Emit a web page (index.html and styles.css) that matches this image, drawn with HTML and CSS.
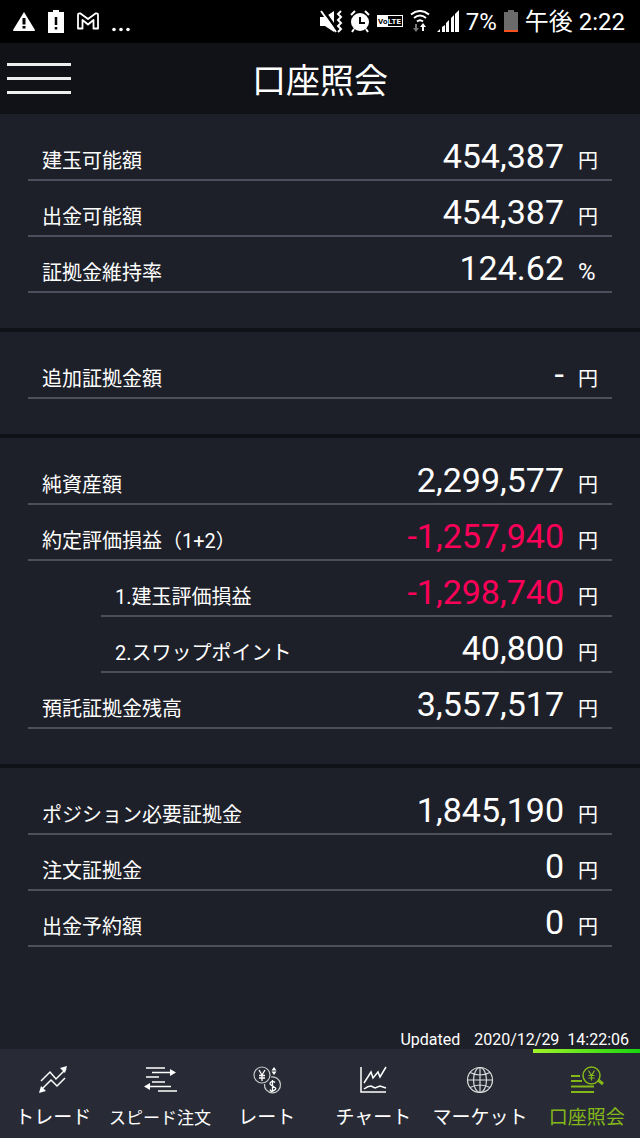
FILE: index.html
```html
<!DOCTYPE html>
<html lang="ja">
<head>
    <meta charset="UTF-8">
    <meta name="viewport" content="width=device-width, initial-scale=1.0">
    <title>口座照会</title>
    <link rel="stylesheet" href="styles.css">
</head>
<body>
    <div class="status-bar">
        <div class="status-left">
            <svg width="22" height="24" viewBox="0 0 22 24">
                <path d="M11 2 L22 20 Q22 21 21 21 H1 Q0 21 0 20 Z" fill="#fff"/>
                <path d="M11 8v6.500M11 16v2.500" stroke="#000" stroke-width="3"/>
            </svg>
            <svg width="16" height="24" viewBox="0 0 16 24">
                <path d="M5 0h6v2h5v21H0V2h5z" fill="#fff"/>
                <path d="M8 7v8M8 17v2.500" stroke="#000" stroke-width="2.500"/>
            </svg>
            <svg width="22" height="24" viewBox="0 0 22 24">
                <path d="M1 18.500V5q0-2 2.500-1.500L11 9l7.500-5.500Q21 3 21 5v13.500h-4.500V10L11 14.500 5.500 10v8.500z" fill="none" stroke="#fff" stroke-width="1.800" stroke-linejoin="round"/>
            </svg>
            <svg width="20" height="24" viewBox="0 0 20 24" fill="#fff">
                <circle cx="2" cy="19.500" r="1.800"/><circle cx="9" cy="19.500" r="1.800"/><circle cx="16" cy="19.500" r="1.800"/>
            </svg>
        </div>
        <div class="status-right">
            <svg width="23" height="24" viewBox="0 0 23 24">
                <path d="M0 7h5l9-6v21l-9-6H0z" fill="#fff"/>
                <path d="M3 0l15 21" stroke="#000" stroke-width="3"/>
                <path d="M1 1l15 21" stroke="#fff" stroke-width="2"/>
                <path d="M21 1l-3 3 3 3-3 3 3 3-3 3 3 3-3 3" fill="none" stroke="#fff" stroke-width="2"/>
            </svg>
            <svg width="20" height="24" viewBox="0 0 20 24">
                <circle cx="10" cy="12" r="9" fill="#fff"/>
                <path d="M1 5l4-4M19 5l-4-4M4 19l-2 3M16 19l2 3" stroke="#fff" stroke-width="2"/>
                <path d="M10 7v6h5" fill="none" stroke="#000" stroke-width="2"/>
            </svg>
            <svg width="26" height="24" viewBox="0 0 26 24">
                <rect x="0.500" y="5.500" width="25" height="11" fill="#000" stroke="#fff"/>
                <path d="M1 6h10v10H1z" fill="#fff"/>
                <text x="1" y="14" class="volte" fill="#000">Vo</text>
                <text x="11" y="14" class="volte" fill="#fff">LTE</text>
            </svg>
            <svg width="20" height="24" viewBox="0 0 20 24">
                <path d="M1 4.500q9-7 18 0M4 8q6-5 12 0M7 11.500q3-2.500 6 0" fill="none" stroke="#fff" stroke-width="2"/>
                <path d="M5 14v4H3l3 4 3-4H7v-4z" fill="#777"/>
                <path d="M12 21v-4h-2l3-4 3 4h-2v4z" fill="#fff"/>
            </svg>
            <svg width="22" height="24" viewBox="0 0 22 24" fill="#fff">
                <path d="M0 22l3-3v3zM5 17l3-2v7H5zM9 13l3-3v12H9zM14 8l3-3v17h-3zM18 4l4-4v22h-4z"/>
            </svg>
            <span>7%</span>
            <svg width="14" height="24" viewBox="0 0 14 24">
                <path d="M4 0h6v2h4v20H0V2h4z" fill="#6b6b6b"/>
                <path d="M0 20h14v2H0z" fill="#f4511e"/>
            </svg>
            <span>午後 2:22</span>
        </div>
    </div>

    <header class="app-header">
        <button class="menu-button" type="button" aria-label="メニュー">
            <span></span>
            <span></span>
            <span></span>
        </button>
        <h1>口座照会</h1>
    </header>

    <main>
        <dl class="section">
            <div class="row"><dt>建玉可能額</dt><dd>454,387 <span class="unit">円</span></dd></div>
            <div class="row"><dt>出金可能額</dt><dd>454,387 <span class="unit">円</span></dd></div>
            <div class="row"><dt>証拠金維持率</dt><dd>124.62 <span class="unit percent">%</span></dd></div>
        </dl>
        <dl class="section">
            <div class="row"><dt>追加証拠金額</dt><dd>- <span class="unit">円</span></dd></div>
        </dl>
        <dl class="section">
            <div class="row"><dt>純資産額</dt><dd>2,299,577 <span class="unit">円</span></dd></div>
            <div class="row minus"><dt>約定評価損益（1+2）</dt><dd>-1,257,940 <span class="unit">円</span></dd></div>
            <div class="row sub minus"><dt>1.建玉評価損益</dt><dd>-1,298,740 <span class="unit">円</span></dd></div>
            <div class="row sub"><dt>2.スワップポイント</dt><dd>40,800 <span class="unit">円</span></dd></div>
            <div class="row"><dt>預託証拠金残高</dt><dd>3,557,517 <span class="unit">円</span></dd></div>
        </dl>
        <dl class="section">
            <div class="row"><dt>ポジション必要証拠金</dt><dd>1,845,190 <span class="unit">円</span></dd></div>
            <div class="row"><dt>注文証拠金</dt><dd>0 <span class="unit">円</span></dd></div>
            <div class="row"><dt>出金予約額</dt><dd>0 <span class="unit">円</span></dd></div>
        </dl>
    </main>

    <div class="updated">
        <span>Updated</span>
        <time datetime="2020-12-29T14:22:06">2020/12/29&nbsp; 14:22:06</time>
    </div>

    <nav class="tabs">
        <a class="tab" href="#trade">
            <svg width="36" height="30" viewBox="0 0 36 30" fill="none" stroke="#fff" stroke-width="1.500">
                <path d="M6 16l9-9 6 7 10-10M30 13l-8 8-6-6-9 9"/>
                <path d="M32 1l-2 7-5-5zM4 28l2-7 5 5z" fill="#fff" stroke="none"/>
            </svg>
            トレード
        </a>
        <a class="tab small" href="#speed">
            <svg width="36" height="30" viewBox="0 0 36 30" fill="none" stroke="#fff" stroke-width="1.500">
                <path d="M4 3h19M10 7.500h19M4 12h13M10 17h13M7 21.500h22M16 26h19"/>
                <path d="M28 4l6 3.500-6 3.500zM8 18l-6 3.500L8 25z" fill="#fff" stroke="none"/>
            </svg>
            スピード注文
        </a>
        <a class="tab" href="#rate">
            <svg width="36" height="30" viewBox="0 0 36 30" fill="none" stroke="#ccc" stroke-width="1.200">
                <circle cx="13" cy="10" r="8"/>
                <path d="M15.500 19a8 8 0 1 0 6.500-7"/>
                <path d="M10 5l3 5 3-5M13 10v6M10 10.500h6M10 13h6" stroke="#fff" stroke-width="1.300"/>
                <path d="M26 17.500q-2-2-4-.500t0 3 4 2.500-1 3-4-1M23.500 15v11" stroke="#fff" stroke-width="1.300"/>
                <path d="M25 2l2.500 3.500h-5zM25 10l2.500-3.500h-5z" fill="#fff" stroke="none"/>
            </svg>
            レート
        </a>
        <a class="tab" href="#chart">
            <svg width="36" height="30" viewBox="0 0 36 30" fill="none" stroke="#fff" stroke-width="1.500">
                <path d="M6 2v25h25"/>
                <path d="M9 18l7-11 2 6 5-6 2 5 6-10M9 24q4-3 7-3l4 2 5-2 6 2"/>
            </svg>
            チャート
        </a>
        <a class="tab" href="#market">
            <svg width="36" height="30" viewBox="0 0 36 30" fill="none" stroke="#ddd" stroke-width="1.200">
                <circle cx="18" cy="15" r="12.500"/>
                <ellipse cx="18" cy="15" rx="6.500" ry="12.500"/>
                <path d="M18 2.500v25M5.500 15h25M8 7.500q10 5 20 0M8 22.500q10-5 20 0"/>
            </svg>
            マーケット
        </a>
        <a class="tab active" href="#account" aria-current="page">
            <svg width="36" height="30" viewBox="0 0 36 30" fill="none" stroke="#84b819" stroke-width="1.500">
                <path d="M2 11h9M2 16h11M2 21.500h23M2 27h23" stroke-width="2"/>
                <circle cx="22.500" cy="10.500" r="8.500"/>
                <path d="M29 15l5 4" stroke-width="3"/>
                <path d="M19.500 5.500l3 5 3-5M22.500 10.500v5M19.500 10.500h6M19.500 13h6" stroke-width="1.200"/>
            </svg>
            口座照会
        </a>
    </nav>
</body>
</html>
```
FILE: styles.css
```css
* {
    box-sizing: border-box;
}

body {
    margin: 0;
    min-height: 100vh;
    display: flex;
    flex-direction: column;
    background: #1e2029;
    color: #fff;
    font-family: Roboto, "Noto Sans CJK JP", sans-serif;
}

svg {
    display: block;
}

.status-bar {
    height: 43px;
    padding: 0 15px 0 13px;
    display: flex;
    justify-content: space-between;
    align-items: center;
    background: #000;
    font-size: 24px;
    line-height: 28px;
}

.status-left,
.status-right {
    display: flex;
    align-items: center;
}

.status-left {
    gap: 13px;
}

.status-right {
    gap: 7px;
}

.volte {
    font-size: 8px;
    font-weight: bold;
}

.app-header {
    height: 71px;
    padding: 0 7px;
    display: grid;
    grid-template-columns: 64px 1fr 64px;
    align-items: center;
    background: #111217;
}

.app-header h1 {
    margin: 0;
    padding-top: 4px;
    font-size: 34px;
    font-weight: normal;
    line-height: 40px;
    text-align: center;
}

.menu-button {
    padding: 0;
    border: none;
    background: none;
    display: flex;
    flex-direction: column;
    gap: 11px;
}

.menu-button span {
    width: 100%;
    height: 3px;
    background: #eee;
}

main {
    flex: 1;
}

.section {
    margin: 0;
    padding: 11px 28px 35px;
}

.section + .section {
    border-top: 4px solid #111217;
}

.row {
    height: 56px;
    padding: 0 14px;
    display: flex;
    justify-content: space-between;
    align-items: baseline;
    border-bottom: 2px solid #4d4f5c;
    line-height: 62px;
}

.row.sub {
    margin-left: 73px;
}

.row dt {
    font-size: 20px;
}

.row dd {
    margin: 0;
    display: flex;
    align-items: baseline;
    gap: 14px;
    font-size: 34px;
}

.minus dd {
    color: #fa0058;
}

.unit {
    width: 20px;
    color: #fff;
    font-size: 20px;
}

.unit.percent {
    font-size: 24px;
}

.updated {
    padding: 0 11px 0 0;
    display: flex;
    justify-content: flex-end;
    gap: 14px;
    font-size: 16px;
    line-height: 18px;
}

.tabs {
    height: 89px;
    display: grid;
    grid-template-columns: repeat(6, 1fr);
    background: #282b36;
}

.tab {
    padding-top: 12px;
    display: flex;
    flex-direction: column;
    align-items: center;
    gap: 9px;
    border-top: 4px solid transparent;
    color: #fff;
    font-size: 19px;
    line-height: 28px;
    text-decoration: none;
    white-space: nowrap;
}

.tab.small {
    font-size: 17px;
}

.tab.active {
    border-image: linear-gradient(to right, #a4f32b, #17d60f) 1;
    border-width: 4px 0 0;
    color: #84b819;
}
```
